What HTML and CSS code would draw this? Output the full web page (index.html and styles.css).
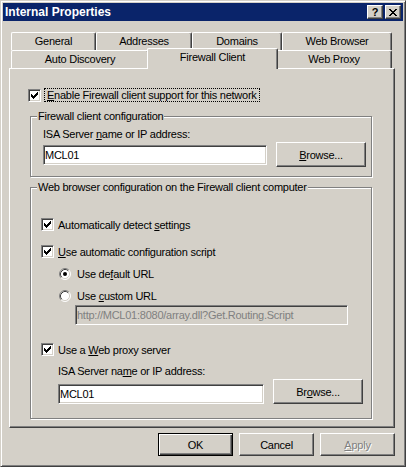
FILE: index.html
```html
<!DOCTYPE html>
<html>
<head>
	<title>Internal Properties</title>
	<link rel="stylesheet" href="styles.css">
</head>
<body>
<div class="window">
	<div class="titlebar">
		<span class="title">Internal Properties</span>
		<span class="cap-btn help">?</span>
		<span class="cap-btn close">
			<svg width="8" height="7" viewBox="0 0 8 7" shape-rendering="crispEdges"><path d="M0 0h2v1H0zM6 0h2v1H6zM1 1h2v1H1zM5 1h2v1H5zM2 2h4v1H2zM3 3h2v1H3zM2 4h4v1H2zM1 5h2v1H1zM5 5h2v1H5zM0 6h2v1H0zM6 6h2v1H6z"/></svg>
		</span>
	</div>

	<div class="sheet">
		<div class="tab-row">
			<div class="tab t-general">General</div>
			<div class="tab t-addresses">Addresses</div>
			<div class="tab t-domains">Domains</div>
			<div class="tab t-browser">Web Browser</div>
		</div>
		<div class="tab-row">
			<div class="tab t-discovery">Auto Discovery</div>
			<div class="tab t-firewall selected">Firewall Client</div>
			<div class="tab t-proxy">Web Proxy</div>
		</div>

		<div class="panel">
			<div class="enable-row">
				<span class="check"><svg width="7" height="7" viewBox="0 0 7 7" shape-rendering="crispEdges"><path d="M0 2h1v3H0zM1 3h1v3H1zM2 4h1v3H2zM3 3h1v3H3zM4 2h1v3H4zM5 1h1v3H5zM6 0h1v3H6z"/></svg></span>
				<span class="focus"><u>E</u>nable Firewall client support for this network</span>
			</div>

			<div class="group group-fw">
				<span class="legend">Firewall client configuration</span>
				<div class="hint">ISA Server <u>n</u>ame or IP address:</div>
				<div class="field-row">
					<div class="textbox tb-fw">MCL01</div>
					<div class="btn browse"><u>B</u>rowse...</div>
				</div>
			</div>

			<div class="group group-web">
				<span class="legend">Web browser configuration on the Firewall client computer</span>

				<div class="opt opt-first">
					<span class="check"><svg width="7" height="7" viewBox="0 0 7 7" shape-rendering="crispEdges"><path d="M0 2h1v3H0zM1 3h1v3H1zM2 4h1v3H2zM3 3h1v3H3zM4 2h1v3H4zM5 1h1v3H5zM6 0h1v3H6z"/></svg></span>
					<span class="opt-label">Automatically detect <u>s</u>ettings</span>
				</div>
				<div class="opt opt-script">
					<span class="check"><svg width="7" height="7" viewBox="0 0 7 7" shape-rendering="crispEdges"><path d="M0 2h1v3H0zM1 3h1v3H1zM2 4h1v3H2zM3 3h1v3H3zM4 2h1v3H4zM5 1h1v3H5zM6 0h1v3H6z"/></svg></span>
					<span class="opt-label"><u>U</u>se automatic configuration script</span>
				</div>

				<div class="opt radio-row">
					<span class="radio"><svg width="12" height="12" viewBox="0 0 12 12">
						<circle cx="6" cy="6" r="5" fill="#fff"/>
						<path d="M2.11 9.89A5.5 5.5 0 0 1 9.89 2.11" stroke="#808080" fill="none"/>
						<path d="M9.89 2.11A5.5 5.5 0 0 1 2.11 9.89" stroke="#fff" fill="none"/>
						<path d="M2.82 9.18A4.5 4.5 0 0 1 9.18 2.82" stroke="#404040" fill="none"/>
						<path d="M9.18 2.82A4.5 4.5 0 0 1 2.82 9.18" stroke="#d4d0c8" fill="none"/>
						<circle cx="6" cy="6" r="2" fill="#000"/>
					</svg></span>
					<span class="radio-label">Use de<u>f</u>ault URL</span>
				</div>
				<div class="opt radio-row">
					<span class="radio"><svg width="12" height="12" viewBox="0 0 12 12">
						<circle cx="6" cy="6" r="5" fill="#fff"/>
						<path d="M2.11 9.89A5.5 5.5 0 0 1 9.89 2.11" stroke="#808080" fill="none"/>
						<path d="M9.89 2.11A5.5 5.5 0 0 1 2.11 9.89" stroke="#fff" fill="none"/>
						<path d="M2.82 9.18A4.5 4.5 0 0 1 9.18 2.82" stroke="#404040" fill="none"/>
						<path d="M9.18 2.82A4.5 4.5 0 0 1 2.82 9.18" stroke="#d4d0c8" fill="none"/>
					</svg></span>
					<span class="radio-label">Use <u>c</u>ustom URL</span>
				</div>
				<div class="textbox tb-url">http://MCL01:8080/array.dll?Get.Routing.Script</div>

				<div class="opt opt-proxy">
					<span class="check"><svg width="7" height="7" viewBox="0 0 7 7" shape-rendering="crispEdges"><path d="M0 2h1v3H0zM1 3h1v3H1zM2 4h1v3H2zM3 3h1v3H3zM4 2h1v3H4zM5 1h1v3H5zM6 0h1v3H6z"/></svg></span>
					<span class="opt-label">Use a <u>W</u>eb proxy server</span>
				</div>
				<div class="hint hint-proxy">ISA Server na<u>m</u>e or IP address:</div>
				<div class="field-row row-proxy">
					<div class="textbox tb-proxy">MCL01</div>
					<div class="btn browse">Br<u>o</u>wse...</div>
				</div>
			</div>
		</div>

		<div class="buttons">
			<div class="btn default">OK</div>
			<div class="btn">Cancel</div>
			<div class="btn disabled"><u>A</u>pply</div>
		</div>
	</div>
</div>
</body>
</html>
```

FILE: styles.css
```css
* {box-sizing:border-box;}
body {margin:0; background:#d4d0c8; color:#000;
	font-family:"Liberation Sans", Arial, sans-serif; font-size:11px; letter-spacing:-0.25px;}

/* window frame */
.window {width:406px; height:467px; padding:2px; background:#d4d0c8;
	border:1px solid; border-color:#d4d0c8 #404040 #404040 #d4d0c8;
	box-shadow:inset 1px 1px #fff, inset -1px -1px #808080;}
.titlebar {height:18px; display:flex; align-items:center; padding:0 2px;
	background:#0a246a; color:#fff;}
.title {flex:1; font-weight:bold; font-size:12px; letter-spacing:0;}
.cap-btn {width:16px; height:14px; display:flex; align-items:center; justify-content:center;
	background:#d4d0c8; color:#000; font-weight:bold; font-size:11px; letter-spacing:0;
	border:1px solid; border-color:#fff #404040 #404040 #fff; box-shadow:inset -1px -1px #808080;}
.help {margin-right:2px;}

/* tabs */
.sheet {width:386px; margin:11px 0 0 6px;}
.tab-row {display:flex; height:18px; padding-left:2px;}
.tab {height:18px; padding-top:2px; line-height:13px; text-align:center; background:#d4d0c8;
	border:1px solid; border-bottom:none; border-color:#fff #404040 #d4d0c8 #fff;
	border-radius:2px 2px 0 0; box-shadow:inset -1px 0 #808080;}
.t-general {width:85px;}
.t-addresses {width:96px;}
.t-domains {width:90px;}
.t-browser {width:110px;}
.t-discovery {width:138px;}
.t-firewall {width:131px;}
.t-proxy {width:116px;}
.tab.selected {position:relative; z-index:1; height:21px; margin:-2px -2px 0 -2px;}

/* property page */
.panel {height:360px; display:flex; flex-direction:column; padding:19px 22px 0 20px;
	border:1px solid; border-color:#fff #404040 #404040 #fff; box-shadow:inset -1px -1px #808080;}

.check {width:13px; height:13px; flex:none; background:#fff;
	border:1px solid; border-color:#808080 #fff #fff #808080;
	box-shadow:inset 1px 1px #404040, inset -1px -1px #d4d0c8;}
.check svg {display:block; margin:2px 0 0 2px;}
.radio {width:12px; height:12px; flex:none;}
.radio svg {display:block;}

.enable-row {display:flex; align-items:flex-start; margin-left:-2px;}
.enable-row .check {margin:1px 3px 0 0;}
.focus {border:1px dotted #000; padding:0 2px; line-height:12px;}

.group {display:flex; flex-direction:column; align-items:flex-start;
	border:1px solid #808080; box-shadow:inset 1px 1px #fff, 1px 1px #fff;}
.legend {margin:-7px 0 0 6px; padding:0 1px; line-height:13px; background:#d4d0c8;}
.group-fw {margin-top:14px; padding-bottom:9px;}
.group-web {margin-top:10px; padding-bottom:14px;}

.hint {line-height:13px; margin:5px 0 0 12px;}
.field-row {display:flex; margin:1px 0 0 12px;}
.textbox {height:20px; margin-top:3px; padding-left:1px; line-height:18px; background:#fff; white-space:nowrap;
	border:1px solid; border-color:#808080 #fff #fff #808080;
	box-shadow:inset 1px 1px #404040, inset -1px -1px #d4d0c8;}
.tb-fw {width:224px;}

.btn {width:75px; height:23px; display:flex; align-items:center; justify-content:center; background:#d4d0c8;
	border:1px solid; border-color:#fff #404040 #404040 #fff; box-shadow:inset -1px -1px #808080;}
.browse {width:90px; height:25px; margin-left:9px;}

.opt {display:flex; align-items:center; height:13px; margin-left:10px;}
.opt-label {padding-left:4px;}
.opt-first {margin-top:24px;}
.opt-script {margin-top:14px;}
.radio-row {margin:9px 0 0 28px;}
.radio-label {padding-left:6px;}
.tb-url {width:273px; margin:3px 0 0 44px; background:#d4d0c8; color:#808080;}
.opt-proxy {margin-top:18px;}
.hint-proxy {margin:9px 0 0 27px;}
.row-proxy {margin-left:27px;}
.tb-proxy {width:206px; margin-top:5px;}

/* dialog buttons */
.buttons {display:flex; justify-content:flex-end; gap:6px; margin-top:5px;}
.btn.default {border-color:#000;
	box-shadow:inset 1px 1px #fff, inset -1px -1px #404040, inset -2px -2px #808080;}
.btn.disabled {color:#808080; text-shadow:1px 1px #fff;}
```
